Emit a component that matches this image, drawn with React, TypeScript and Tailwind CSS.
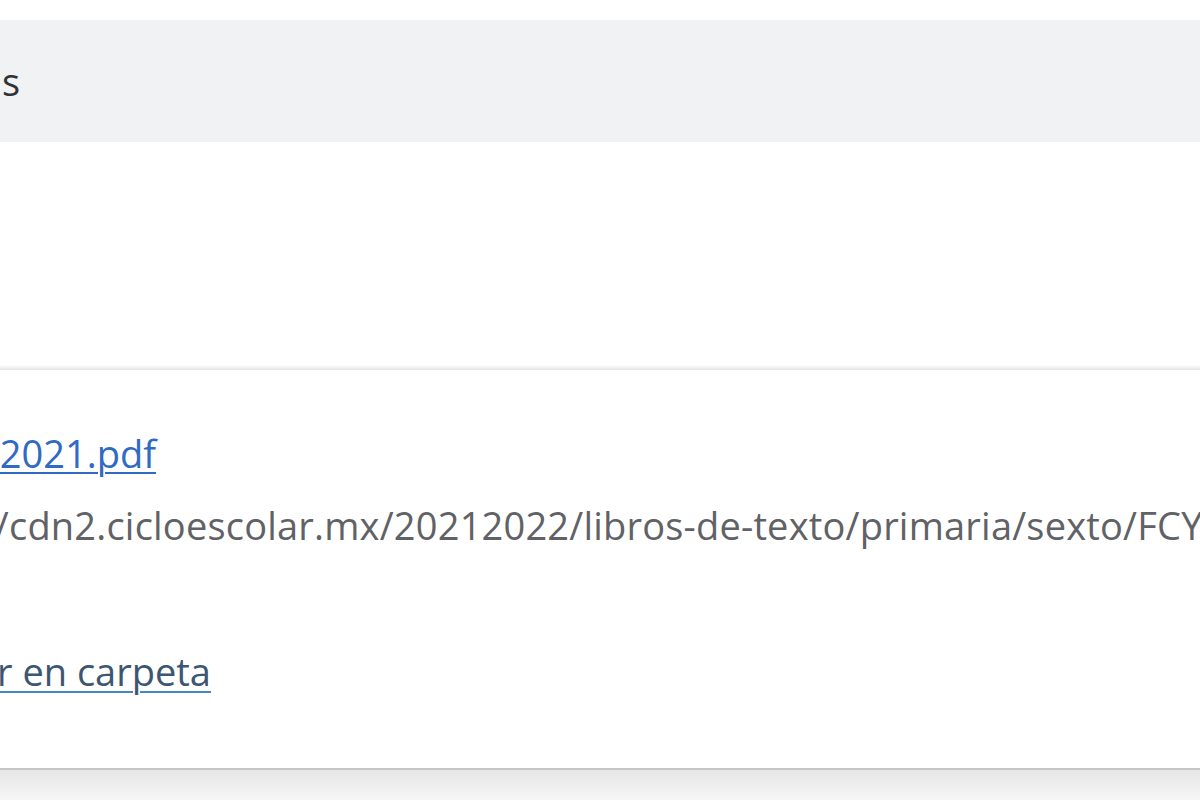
export default function App() {
  return (
    <div
      className="relative w-[1200px] h-[800px] overflow-hidden bg-white flex flex-col"
      style={{ fontFamily: '"Open Sans", "Noto Sans", sans-serif' }}
    >
      {/* toolbar */}
      <div className="h-[20px] bg-white" />
      <div className="h-[122px] bg-[#f1f2f4] flex items-center">
        <div className="w-[20px] flex justify-end shrink-0">
          <span className="whitespace-nowrap text-[38px] text-[#303236] leading-none">
            Descargas
          </span>
        </div>
      </div>

      <div className="h-[223px] bg-white" />

      {/* download card */}
      <div className="h-[5px] bg-gradient-to-b from-white to-[#e4e4e4]" />
      <div className="h-[398px] bg-white flex flex-col text-[38px] leading-none">
        <div className="h-[64px] shrink-0" />
        <div className="flex h-[38px] shrink-0">
          <div className="w-[156px] flex justify-end shrink-0">
            <a className="whitespace-nowrap text-[#2f6ac4] underline decoration-[2px] underline-offset-[4px]">
              FCYE-6-2021.pdf
            </a>
          </div>
        </div>
        <div className="h-[34px] shrink-0" />
        <div className="flex h-[38px] shrink-0 whitespace-nowrap text-[#606266] tracking-[0.2px]">
          <div className="w-[9px] flex justify-end shrink-0">
            <span>https://</span>
          </div>
          <span>cdn2.cicloescolar.mx/20212022/libros-de-texto/primaria/sexto/FCYE-6-2021.pdf</span>
        </div>
        <div className="h-[108px] shrink-0" />
        <div className="flex h-[38px] shrink-0">
          <div className="w-[211px] flex justify-end shrink-0">
            <a className="whitespace-nowrap text-[#3d5672] underline decoration-[#4a84c6] decoration-[2px] underline-offset-[5px]">
              Mostrar en carpeta
            </a>
          </div>
        </div>
      </div>
      <div className="h-[2px] bg-[#c6c6c6]" />
      <div className="flex-1 bg-gradient-to-b from-[#e6e6e6] to-[#f6f6f6]" />
    </div>
  );
}
